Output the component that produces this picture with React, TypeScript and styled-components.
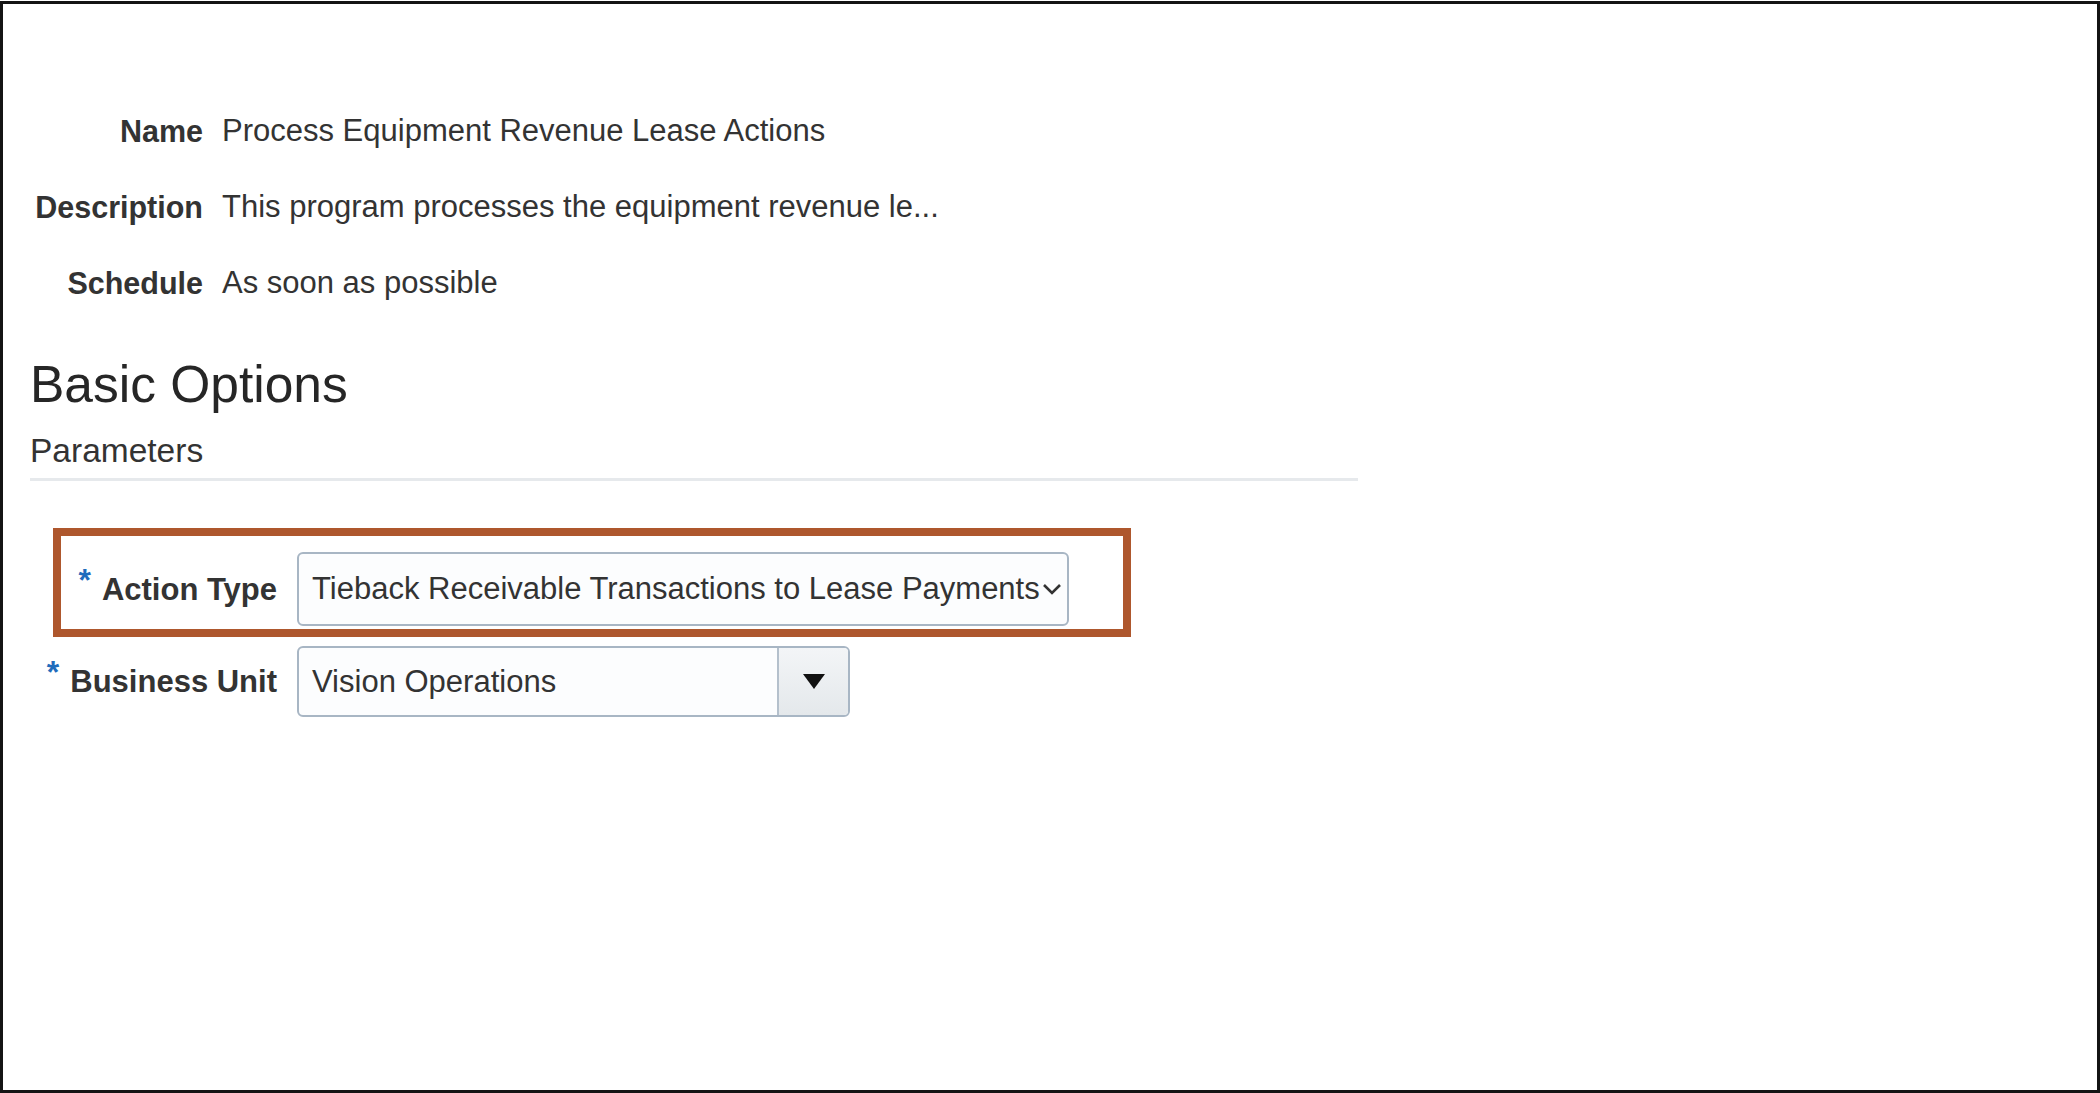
import React from 'react'
import styled, { createGlobalStyle } from 'styled-components'

const GlobalStyle = createGlobalStyle`
  html, body {
    margin: 0;
    padding: 0;
    background: #ffffff;
  }
  body {
    font-family: "Liberation Sans", Arial, sans-serif;
    color: #333333;
  }
  * {
    box-sizing: border-box;
  }
`

const Frame = styled.div`
  width: 2100px;
  height: 1092px;
  margin-top: 1px;
  border: 3px solid #141414;
  background: #ffffff;
  padding: 112px 0 0 27px;
`

const InfoGrid = styled.div`
  display: grid;
  grid-template-columns: 173px auto;
  justify-content: start;
  column-gap: 19px;
  row-gap: 46px;
  font-size: 31px;
  line-height: 30px;
`

const InfoLabel = styled.div`
  text-align: right;
  font-weight: 700;
  font-size: 30.5px;
  color: #333333;
  white-space: nowrap;
`

const InfoValue = styled.div`
  color: #333333;
  white-space: nowrap;
`

const SectionTitle = styled.h2`
  margin: 61px 0 0;
  font-size: 51.5px;
  line-height: 51px;
  font-weight: 400;
  color: #262626;
`

const SectionSubtitle = styled.h3`
  margin: 24px 0 0;
  font-size: 33.5px;
  line-height: 33px;
  font-weight: 400;
  color: #333333;
`

const Divider = styled.div`
  width: 1328px;
  height: 3px;
  margin-top: 11px;
  background: #e6e9ec;
`

const Form = styled.div`
  display: flex;
  flex-direction: column;
  gap: 20px;
  margin-top: 71px;
`

const FormRow = styled.div`
  position: relative;
  display: grid;
  grid-template-columns: 247px auto;
  justify-content: start;
  align-items: center;
  column-gap: 20px;
  width: fit-content;
`

const Highlight = styled.div`
  position: absolute;
  left: 23px;
  top: -24px;
  right: -62px;
  bottom: -11px;
  border: 8px solid #ae572d;
  pointer-events: none;
`

const FieldLabel = styled.label`
  display: flex;
  justify-content: flex-end;
  align-items: baseline;
  font-size: 31px;
  font-weight: 700;
  color: #333333;
  white-space: nowrap;
`

const Required = styled.span`
  color: #1f6cbc;
  font-size: 32px;
  margin-right: 11px;
  position: relative;
  top: -9px;
`

const SelectBox = styled.div<{ $width: number; $height: number }>`
  display: flex;
  align-items: stretch;
  width: ${p => p.$width}px;
  height: ${p => p.$height}px;
  border: 2px solid #a8b6c4;
  border-radius: 6px;
  background: #fcfdfe;
  overflow: hidden;
`

const SelectText = styled.div`
  flex: 1;
  display: flex;
  align-items: center;
  padding: 0 9px 0 13px;
  font-size: 31px;
  color: #333333;
  white-space: nowrap;
`

const DropButton = styled.div`
  width: 71px;
  display: flex;
  align-items: center;
  justify-content: center;
  border-left: 2px solid #b4c0cc;
  background: linear-gradient(#f3f5f7, #e4e8eb);
`

const ChevronIcon = styled.svg`
  flex-shrink: 0;
  margin-left: 1px;
`

const Chevron = () => (
  <ChevronIcon width="22" height="14" viewBox="0 0 22 14">
    <polyline points="3,3 11,11 19,3" fill="none" stroke="#333" strokeWidth="2.6" />
  </ChevronIcon>
)

const Triangle = () => (
  <svg width="24" height="17" viewBox="0 0 24 17">
    <polygon points="1,1 23,1 12,16" fill="#111" />
  </svg>
)

const App: React.FC = () => {
  return (
    <>
      <GlobalStyle />
      <Frame>
        <InfoGrid>
          <InfoLabel>Name</InfoLabel>
          <InfoValue>Process Equipment Revenue Lease Actions</InfoValue>
          <InfoLabel>Description</InfoLabel>
          <InfoValue>This program processes the equipment revenue le...</InfoValue>
          <InfoLabel>Schedule</InfoLabel>
          <InfoValue>As soon as possible</InfoValue>
        </InfoGrid>

        <SectionTitle>Basic Options</SectionTitle>
        <SectionSubtitle>Parameters</SectionSubtitle>
        <Divider />

        <Form>
          <FormRow>
            <Highlight />
            <FieldLabel>
              <Required>*</Required>
              Action Type
            </FieldLabel>
            <SelectBox $width={772} $height={74}>
              <SelectText>
                Tieback Receivable Transactions to Lease Payments
                <Chevron />
              </SelectText>
            </SelectBox>
          </FormRow>

          <FormRow>
            <FieldLabel>
              <Required>*</Required>
              Business Unit
            </FieldLabel>
            <SelectBox $width={553} $height={71}>
              <SelectText>Vision Operations</SelectText>
              <DropButton>
                <Triangle />
              </DropButton>
            </SelectBox>
          </FormRow>
        </Form>
      </Frame>
    </>
  )
}

export default App
